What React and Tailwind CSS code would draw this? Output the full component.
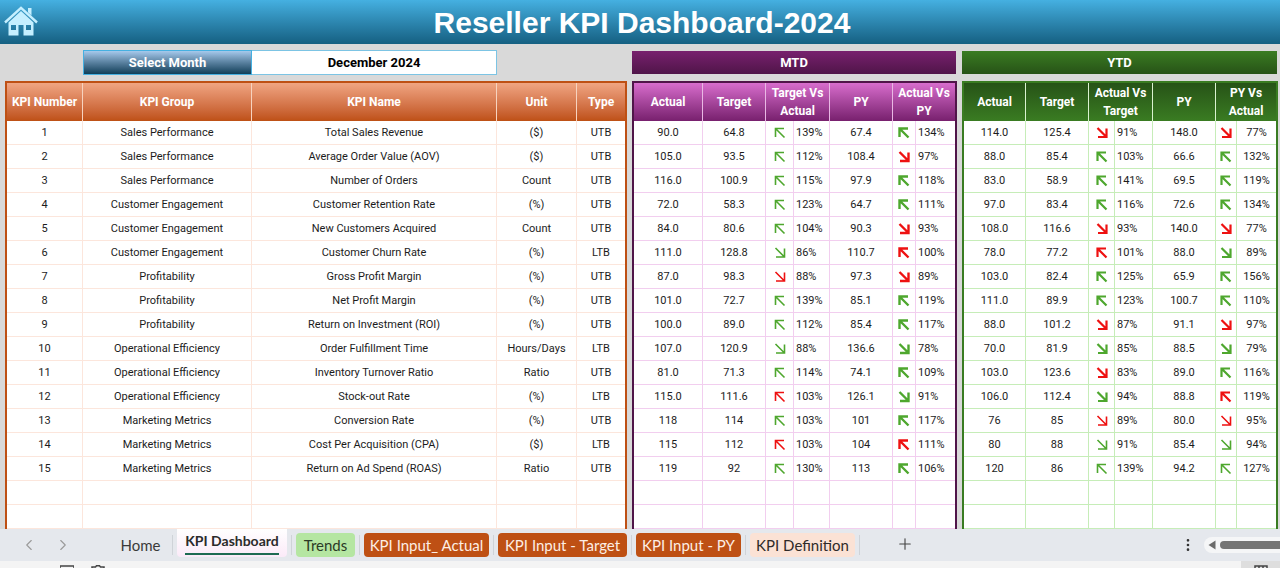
import React from 'react'
import { ChevronLeft, ChevronRight, Plus, MoreVertical } from 'lucide-react'

// number, group, name, unit, type
const KPIS = [
  [1, 'Sales Performance', 'Total Sales Revenue', '($)', 'UTB'],
  [2, 'Sales Performance', 'Average Order Value (AOV)', '($)', 'UTB'],
  [3, 'Sales Performance', 'Number of Orders', 'Count', 'UTB'],
  [4, 'Customer Engagement', 'Customer Retention Rate', '(%)', 'UTB'],
  [5, 'Customer Engagement', 'New Customers Acquired', 'Count', 'UTB'],
  [6, 'Customer Engagement', 'Customer Churn Rate', '(%)', 'LTB'],
  [7, 'Profitability', 'Gross Profit Margin', '(%)', 'UTB'],
  [8, 'Profitability', 'Net Profit Margin', '(%)', 'UTB'],
  [9, 'Profitability', 'Return on Investment (ROI)', '(%)', 'UTB'],
  [10, 'Operational Efficiency', 'Order Fulfillment Time', 'Hours/Days', 'LTB'],
  [11, 'Operational Efficiency', 'Inventory Turnover Ratio', 'Ratio', 'UTB'],
  [12, 'Operational Efficiency', 'Stock-out Rate', '(%)', 'LTB'],
  [13, 'Marketing Metrics', 'Conversion Rate', '(%)', 'UTB'],
  [14, 'Marketing Metrics', 'Cost Per Acquisition (CPA)', '($)', 'LTB'],
  [15, 'Marketing Metrics', 'Return on Ad Spend (ROAS)', 'Ratio', 'UTB'],
]

// actual, target, arrow, percent, previous year, arrow, percent
// arrows: first letter is the colour (g/r), second the direction (u/d)
const MTD = [
  ['90.0', '64.8', 'gu', '139%', '67.4', 'gu', '134%'],
  ['105.0', '93.5', 'gu', '112%', '108.4', 'rd', '97%'],
  ['116.0', '100.9', 'gu', '115%', '97.9', 'gu', '118%'],
  ['72.0', '58.3', 'gu', '123%', '64.7', 'gu', '111%'],
  ['84.0', '80.6', 'gu', '104%', '90.3', 'rd', '93%'],
  ['111.0', '128.8', 'gd', '86%', '110.7', 'ru', '100%'],
  ['87.0', '98.3', 'rd', '88%', '97.3', 'rd', '89%'],
  ['101.0', '72.7', 'gu', '139%', '85.1', 'gu', '119%'],
  ['100.0', '89.0', 'gu', '112%', '85.4', 'gu', '117%'],
  ['107.0', '120.9', 'gd', '88%', '136.6', 'gd', '78%'],
  ['81.0', '71.3', 'gu', '114%', '74.1', 'gu', '109%'],
  ['115.0', '111.6', 'ru', '103%', '126.1', 'gd', '91%'],
  ['118', '114', 'gu', '103%', '101', 'gu', '117%'],
  ['115', '112', 'ru', '103%', '104', 'ru', '111%'],
  ['119', '92', 'gu', '130%', '113', 'gu', '106%'],
]

const YTD = [
  ['114.0', '125.4', 'rd', '91%', '148.0', 'rd', '77%'],
  ['88.0', '85.4', 'gu', '103%', '66.6', 'gu', '132%'],
  ['83.0', '58.9', 'gu', '141%', '69.5', 'gu', '119%'],
  ['97.0', '83.4', 'gu', '116%', '72.6', 'gu', '134%'],
  ['108.0', '116.6', 'rd', '93%', '140.0', 'rd', '77%'],
  ['78.0', '77.2', 'ru', '101%', '88.0', 'gd', '89%'],
  ['103.0', '82.4', 'gu', '125%', '65.9', 'gu', '156%'],
  ['111.0', '89.9', 'gu', '123%', '100.7', 'gu', '110%'],
  ['88.0', '101.2', 'rd', '87%', '91.1', 'rd', '97%'],
  ['70.0', '81.9', 'gd', '85%', '88.5', 'gd', '79%'],
  ['103.0', '123.6', 'rd', '83%', '89.0', 'gu', '116%'],
  ['106.0', '112.4', 'gd', '94%', '88.8', 'ru', '119%'],
  ['76', '85', 'rd', '89%', '80.0', 'rd', '95%'],
  ['80', '88', 'gd', '91%', '85.4', 'gd', '94%'],
  ['120', '86', 'gu', '139%', '94.2', 'gu', '127%'],
]

const TABS = [
  { label: 'Home', style: 'w-[55px] text-[#3a3a3a]' },
  { label: 'KPI Dashboard', active: true },
  { label: 'Trends', style: 'w-[59px] bg-[#b5e6a2] text-[#2b3a26]' },
  { label: 'KPI Input_ Actual', style: 'w-[125px] bg-[#be5014] text-[#fdeee4]' },
  { label: 'KPI Input - Target', style: 'w-[129px] bg-[#be5014] text-[#fdeee4]' },
  { label: 'KPI Input - PY', style: 'w-[105px] bg-[#be5014] text-[#fdeee4]' },
  { label: 'KPI Definition', style: 'w-[105px] bg-[#fbe2d5] text-[#2f2a28]' },
]

function Arrow({ kind, weight }) {
  const color = kind[0] === 'g' ? '#4ea72e' : '#ee1111'
  return (
    <svg viewBox="0 0 12 12" className="mx-auto h-3 w-3" fill="none" stroke={color} strokeWidth={weight}>
      {kind[1] === 'u' ? (
        <path d="M10 1.500H1.500V10M1.500 1.500L10.500 10.500" />
      ) : (
        <path d="M2 10H10.500V1.500M10.500 10L1.500 1" />
      )}
    </svg>
  )
}

function HomeIcon() {
  return (
    <svg viewBox="0 0 34 30" className="h-[30px] w-[34px]">
      <path d="M1 16.500L17 1.800L33 16.500" fill="none" stroke="#c5efff" strokeWidth="2.400" />
      <path d="M24 2h3.500v7.500L24 6.300z" fill="#c5efff" />
      <path
        d="M17 5L29.500 16.500V29.500H19.500V19H14.500V29.500H4.500V16.500zM7 19v5h5v-5zM22 19v5h5v-5z"
        fill="#c5efff"
        fillRule="evenodd"
      />
    </svg>
  )
}

function InfoTable() {
  const cell = 'h-6 border-r border-b border-[#fce6dc] p-0 pt-0.5 last:border-r-0'
  const head = 'h-[38px] border-r border-[#f7d3bf] p-0 font-bold last:border-r-0'
  return (
    <table className="w-full table-fixed border-separate border-spacing-0 border-2 border-b-0 border-[#be5014] bg-white text-center">
      <colgroup>
        <col className="w-[76px]" />
        <col className="w-[169px]" />
        <col className="w-[245px]" />
        <col className="w-[80px]" />
        <col className="w-[48px]" />
      </colgroup>
      <thead className="bg-linear-to-b from-[#f0a582] to-[#be5014] text-[12px] text-white">
        <tr>
          {['KPI Number', 'KPI Group', 'KPI Name', 'Unit', 'Type'].map(h => (
            <th key={h} className={head}>{h}</th>
          ))}
        </tr>
      </thead>
      <tbody className="text-[11px]">
        {KPIS.map(row => (
          <tr key={row[0]}>
            {row.map((v, i) => (
              <td key={i} className={cell}>{v}</td>
            ))}
          </tr>
        ))}
        {[0, 1].map(r => (
          <tr key={r}>
            {[0, 1, 2, 3, 4].map(i => (
              <td key={i} className={cell}></td>
            ))}
          </tr>
        ))}
      </tbody>
    </table>
  )
}

function PeriodTable({ rows, heads, theme, weights, thinFrom, lastAlign, cols }) {
  const base = `h-6 border-r border-b p-0 last:border-r-0 ${theme.cell}`
  const cell = `${base} pt-0.5`
  const head = `h-[38px] border-r p-0 leading-[18px] font-bold last:border-r-0 ${theme.headCell}`
  return (
    <table className={`w-full table-fixed border-separate border-spacing-0 border-2 border-b-0 bg-white text-center ${theme.table}`}>
      <colgroup>
        {cols.map((c, i) => (
          <col key={i} className={c} />
        ))}
      </colgroup>
      <thead className={`text-[12px] text-white ${theme.head}`}>
        <tr>
          {heads.map((h, i) => (
            <th key={h} colSpan={i === 2 || i === 4 ? 2 : 1} className={head}>
              <span className="mx-auto block max-w-[60px]">{h}</span>
            </th>
          ))}
        </tr>
      </thead>
      <tbody className="text-[11px]">
        {rows.map((r, n) => (
          <tr key={n}>
            <td className={cell}>{r[0]}</td>
            <td className={cell}>{r[1]}</td>
            <td className={base}><Arrow kind={r[2]} weight={n >= thinFrom ? 1.6 : weights[0]} /></td>
            <td className={cell}><span className="block pl-0.5 text-left">{r[3]}</span></td>
            <td className={cell}>{r[4]}</td>
            <td className={base}><Arrow kind={r[5]} weight={n >= thinFrom ? 1.6 : weights[1]} /></td>
            <td className={cell}><span className={`block ${lastAlign}`}>{r[6]}</span></td>
          </tr>
        ))}
        {[0, 1].map(r => (
          <tr key={r}>
            {cols.map((c, i) => (
              <td key={i} className={cell}></td>
            ))}
          </tr>
        ))}
      </tbody>
    </table>
  )
}

const purple = {
  table: 'border-[#501549]',
  head: 'bg-linear-to-b from-[#d86dcd] to-[#78206e]',
  headCell: 'border-[#e9b8e4]',
  cell: 'border-[#f2ceef]',
}

const green = {
  table: 'border-[#3a7c22]',
  head: 'bg-linear-to-b from-[#275317] to-[#3a7c22]',
  headCell: 'border-[#daf2d0]',
  cell: 'border-[#c6edb8]',
}

function SheetTabs() {
  return (
    <nav className="flex h-8 items-start bg-[#e5e8ed] font-[Lato,sans-serif] text-[15px]">
      <div className="flex h-8 w-[113px] items-center gap-4 pl-5 text-[#9a9a9a]">
        <button aria-label="Previous sheet"><ChevronLeft size={18} strokeWidth={1.5} /></button>
        <button aria-label="Next sheet"><ChevronRight size={18} strokeWidth={1.5} /></button>
      </div>
      {TABS.map(t => (
        <div key={t.label} className="flex items-start">
          {t.active ? (
            <button className="flex h-7 w-[110px] items-start justify-center rounded-b bg-linear-to-b from-white to-[#fbeaf8] text-[14px] font-bold whitespace-nowrap text-[#2b2b2b]">
              <span className="border-b-2 border-[#1e6b52] leading-6">{t.label}</span>
            </button>
          ) : (
            <button className={`mt-1 h-6 rounded whitespace-nowrap ${t.style}`}>{t.label}</button>
          )}
          <span className="mx-1 mt-1.5 h-5 w-px bg-[#cfd3d8]"></span>
        </div>
      ))}
      <button aria-label="New sheet" className="mt-1.5 ml-[32px] text-[#444]"><Plus size={18} strokeWidth={1.5} /></button>
      <button aria-label="More" className="mt-2 ml-auto text-[#333]"><MoreVertical size={16} /></button>
      <div className="mt-2 ml-2 flex h-4 w-[76px] items-center gap-1 rounded-l-full bg-[#f5f6f7] pl-1">
        <svg viewBox="0 0 8 10" className="h-2.5 w-2"><path d="M7.500 0.500V9.500L0.500 5z" fill="#6b6b6b" /></svg>
        <span className="h-2 flex-1 rounded-l-full bg-[#757575]"></span>
      </div>
    </nav>
  )
}

function StatusBar() {
  return (
    <footer className="flex h-[7px] items-start overflow-hidden bg-[#f4f4f4] pl-[60px] text-[#444]">
      <svg viewBox="0 0 14 14" className="mt-1 h-3.5 w-3.5 shrink-0" fill="none" stroke="currentColor" strokeWidth="1.500">
        <path d="M0 1H14V13H0z" />
      </svg>
      <svg viewBox="0 0 14 14" className="mt-1 ml-[17px] h-3.5 w-3.5 shrink-0" fill="none" stroke="currentColor" strokeWidth="1.500">
        <path d="M1 3.500V2H4.500L5.500 0.800H8.500L9.500 2H13V3.500M4 4H10V13H4z" />
      </svg>
      <span className="ml-auto flex h-[7px] w-[39px] justify-center bg-[#dedede]">
        <svg viewBox="0 0 14 14" className="mt-1 h-3.5 w-3.5 shrink-0" fill="none" stroke="currentColor" strokeWidth="1.500">
          <path d="M1 1H13V13H1zM5 1V13M9 1V13M1 5H13" />
        </svg>
      </span>
    </footer>
  )
}

export default function App() {
  return (
    <div className="w-full overflow-hidden bg-[#d9d9d9] font-[Roboto,sans-serif] text-[#1c1c1c]">
      <header className="grid h-11 grid-cols-[40px_1fr_36px] items-center bg-linear-to-b from-[#45b0e1] to-[#156082]">
        <a href="#home" aria-label="Home" className="-mt-1 pl-1"><HomeIcon /></a>
        <h1 className="text-center font-['Liberation_Sans',Arial,sans-serif] text-[30px] font-bold text-white">
          Reseller KPI Dashboard-2024
        </h1>
      </header>

      <main className="grid grid-cols-[622fr_325fr_316fr] gap-x-[5px] pt-1.5 pr-0.5 pl-[5px]">
        <div className="mb-1.5 grid h-[25px] grid-cols-[78fr_169fr_245fr_130fr] text-[13px] font-bold">
          <label
            htmlFor="month"
            className="col-start-2 flex items-center justify-center border border-[#45b0e1] bg-linear-to-b from-[#a6c9ec] to-[#0e3f59] text-white"
          >
            Select Month
          </label>
          <select
            id="month"
            className="appearance-none border border-l-0 border-[#7cc4e4] bg-white text-center text-black [text-align-last:center]"
          >
            <option>December 2024</option>
          </select>
        </div>
        <h2 className="mr-px mt-px mb-[7px] flex h-[23px] items-center justify-center bg-linear-to-b from-[#78206e] to-[#501549] text-[13px] font-bold text-white">
          MTD
        </h2>
        <h2 className="mr-px mt-px mb-[7px] flex h-[23px] items-center justify-center bg-linear-to-b from-[#3a7c22] to-[#275317] text-[13px] font-bold text-white">
          YTD
        </h2>
        <InfoTable />
        <PeriodTable
          rows={MTD}
          heads={['Actual', 'Target', 'Target Vs Actual', 'PY', 'Actual Vs PY']}
          theme={purple}
          weights={[1.6, 2.4]}
          thinFrom={99}
          lastAlign="pl-0.5 text-left"
          cols={['w-[69px]', 'w-[63px]', 'w-[28px]', 'w-[36px]', 'w-[63px]', 'w-[23px]', 'w-[39px]']}
        />
        <PeriodTable
          rows={YTD}
          heads={['Actual', 'Target', 'Actual Vs Target', 'PY', 'PY Vs Actual']}
          theme={green}
          weights={[2.2, 2.2]}
          thinFrom={12}
          lastAlign="text-center"
          cols={['w-[62px]', 'w-[63px]', 'w-[26px]', 'w-[38px]', 'w-[63px]', 'w-[21px]', 'w-[39px]']}
        />
      </main>

      <SheetTabs />
      <StatusBar />
    </div>
  )
}
